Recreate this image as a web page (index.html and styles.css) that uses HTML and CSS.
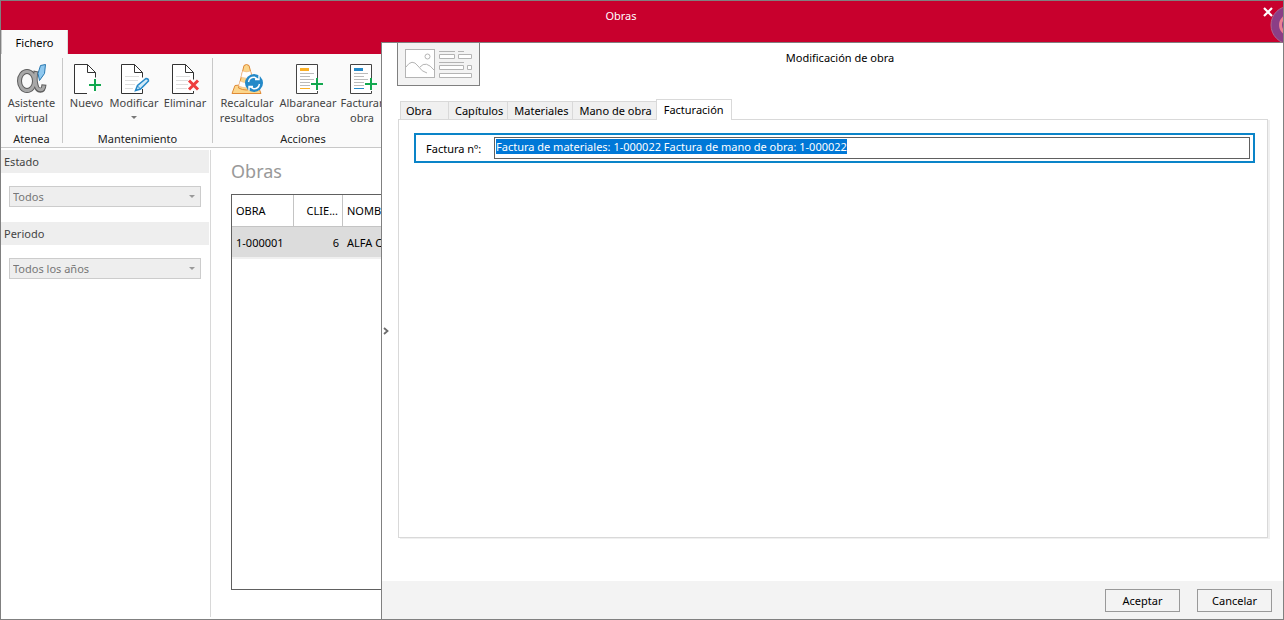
FILE: index.html
```html
<!DOCTYPE html>
<html lang="es">
<head>
<meta charset="utf-8">
<title>Obras</title>
<link rel="stylesheet" href="styles.css">
</head>
<body>
<div class="window">
  <header class="titlebar">
    <h1 class="window-title">Obras</h1>
    <button class="menu-tab" type="button">Fichero</button>
    <button class="close" type="button" aria-label="Cerrar">
      <svg width="10" height="10" viewBox="0 0 10 10"><path d="M1 1l8 8M9 1L1 9" stroke="#fff" stroke-width="2.2"/></svg>
    </button>
  </header>
  <svg class="badge" width="14" height="40" viewBox="0 0 14 40" aria-hidden="true">
    <circle cx="20" cy="20" r="19" fill="#8b3e86" stroke="#a9688f"/>
    <circle cx="20" cy="20" r="9.500" fill="none" stroke="#ea7f92" stroke-width="3"/>
    <path d="M13 3h1v11h-1zM13 27h1v11h-1z" fill="#5a62c0"/>
  </svg>

  <nav class="ribbon">
    <section class="group group-atenea">
      <div class="tools">
        <button class="tool" type="button">
          <svg width="32" height="32" viewBox="0 0 32 32">
            <g fill="none" stroke="#5c5c5c" stroke-width="5">
              <ellipse cx="11" cy="18" rx="7.500" ry="9.500"/>
              <path d="M20 8c-1 5-1.500 9 0 14 1.500 7 7.500 7 8-.5"/>
            </g>
            <g fill="none" stroke="#a8a8a8" stroke-width="3">
              <ellipse cx="11" cy="18" rx="7.500" ry="9.500"/>
              <path d="M20 9c-1 5-1.500 8 0 13 1.500 6 7 6.500 8 .5"/>
            </g>
            <path d="M24.500 2.500l5-1-1 9-5 7-1.500-7z" fill="#8fc8ef" stroke="#2878b0"/>
          </svg>
          <span>Asistente<br>virtual</span>
        </button>
      </div>
      <h2 class="group-name">Atenea</h2>
    </section>
    <section class="group group-edit">
      <div class="tools">
        <button class="tool" type="button">
          <svg width="32" height="32" viewBox="0 0 32 32">
            <path d="M3.500 1.500h13l8 8v21h-21z" fill="#fff"/><path d="M16 30.500H3.500v-29h13l8 8v5M16.500 1.500v8h8" fill="none" stroke="#333"/>
            <path d="M24 16v12M18 22h12" stroke="#12a84f" stroke-width="2"/>
          </svg>
          <span>Nuevo</span>
        </button>
        <button class="tool" type="button">
          <svg width="32" height="32" viewBox="0 0 32 32">
            <path d="M3.500 1.500h13l8 8v21h-21z" fill="#fff"/><path d="M24.500 26v4.500h-21v-29h13l8 8v5M16.500 1.500v8h8" fill="none" stroke="#333"/>
            <path d="M7 13.500h14M7 17.500h13M7 21.500h10M7 25.500h8" stroke="#ddd"/>
            <path d="M17.500 27.500l2-5L28 15.500q2.500 0 2.500 2.500L22.500 26z" fill="#d2eaf8" stroke="#2488c8" stroke-width="1.500"/><path d="M19.500 23l3 3" stroke="#2488c8"/>
          </svg>
          <span>Modificar</span>
          <i class="arrow"></i>
        </button>
        <button class="tool" type="button">
          <svg width="32" height="32" viewBox="0 0 32 32">
            <path d="M3.500 1.500h13l8 8v21h-21z" fill="#fff"/><path d="M24.500 28v2.500h-21v-29h13l8 8v7M16.500 1.500v8h8" fill="none" stroke="#333"/>
            <path d="M7 13.500h14M7 17.500h12M7 21.500h12M7 25.500h11" stroke="#ddd"/>
            <path d="M20 17.500l9 9M29 17.500l-9 9" stroke="#ee3e3e" stroke-width="3"/>
          </svg>
          <span>Eliminar</span>
        </button>
      </div>
      <h2 class="group-name">Mantenimiento</h2>
    </section>
    <section class="group group-actions">
      <div class="tools">
        <button class="tool" type="button">
          <svg width="32" height="32" viewBox="0 0 32 32">
            <path d="M1 30.500l3-8 22-2 4 10z" fill="#fbd68c" stroke="#e08a35"/>
            <path d="M7.500 25L13 2.500q2.500-2 5 0L24 25q-9 4-16.500 0z" fill="#fbd68c" stroke="#e08a35"/>
            <path d="M11.600 8q4 1.800 7.800 0l1.600 6q-5.500 2.500-11 0zM9 18q7 3.500 13.500 0l1.200 5q-8 3.500-16 0z" fill="#fff" stroke="#efb080" stroke-width=".5"/>
            <circle cx="23" cy="20" r="9" fill="#2489c8"/>
            <path d="M17.500 19q1-5 6-4.700l4 2.200M28.500 21q-1 5-6 4.700l-4-2.200M28 12.500v4h-4M18 27.500v-4h4" fill="none" stroke="#fff" stroke-width="1.400"/>
          </svg>
          <span>Recalcular<br>resultados</span>
        </button>
        <button class="tool" type="button">
          <svg width="32" height="32" viewBox="0 0 32 32">
            <path d="M4.500 1.500h21v29h-21z" fill="#fff"/><path d="M25.500 15V1.500h-21v29h21V28" fill="none" stroke="#444"/>
            <path d="M8 5h9v3H8zM8 25h10v1H8z" fill="#fbb026"/>
            <path d="M8 10.500h14M8 13.500h10M8 16.500h14M8 19.500h10M8 22.500h10" stroke="#bbb"/>
            <path d="M25 15v12M19 21h12" stroke="#12a84f" stroke-width="2"/>
          </svg>
          <span>Albaranear<br>obra</span>
        </button>
        <button class="tool" type="button">
          <svg width="32" height="32" viewBox="0 0 32 32">
            <path d="M4.500 1.500h21v29h-21z" fill="#fff"/><path d="M25.500 15V1.500h-21v29h21V28" fill="none" stroke="#444"/>
            <path d="M8 5h9v3H8zM8 25h10v1H8z" fill="#2489c8"/>
            <path d="M8 10.500h14M8 13.500h10M8 16.500h14M8 19.500h10M8 22.500h10" stroke="#bbb"/>
            <path d="M25 15v12M19 21h12" stroke="#12a84f" stroke-width="2"/>
          </svg>
          <span>Facturar<br>obra</span>
        </button>
      </div>
      <h2 class="group-name">Acciones</h2>
    </section>
  </nav>

  <div class="workspace">
    <aside class="filters">
      <label class="filter-name" for="estado">Estado</label>
      <div class="select-box"><select id="estado" disabled><option>Todos</option></select><i class="arrow"></i></div>
      <label class="filter-name" for="periodo">Periodo</label>
      <div class="select-box"><select id="periodo" disabled><option>Todos los años</option></select><i class="arrow"></i></div>
    </aside>
    <main class="content">
      <h2 class="content-title">Obras</h2>
      <div class="grid">
        <table>
          <thead><tr><th class="col-id">OBRA</th><th class="col-client">CLIE...</th><th>NOMBRE</th></tr></thead>
          <tbody><tr><td>1-000001</td><td class="number">6</td><td>ALFA C</td></tr></tbody>
        </table>
      </div>
    </main>
  </div>

  <section class="dialog" role="dialog" aria-labelledby="dialog-title">
    <div class="dialog-body">
      <button class="collapse" type="button" aria-label="Contraer">
        <svg width="7" height="8" viewBox="0 0 7 8"><path d="M1 1l3.500 3L1 7" fill="none" stroke="#6c6c6c" stroke-width="1.800"/></svg>
      </button>
      <div class="dialog-main">
        <div class="dialog-head">
          <div class="card-icon">
            <svg width="68" height="30" viewBox="0 0 68 30" fill="none" stroke="#b4b4b4">
              <rect x=".5" y=".5" width="29" height="28" fill="#fff"/>
              <circle cx="22.500" cy="7.500" r="2.500"/>
              <path d="M1 18q6-9 12-1 4 6 9 7M15 18q6-7 14 3M34 2.500h16M53 2.500h6M34 13.500h25"/>
              <path d="M34.500 5.500h15v4h-15zM53.500 5.500h13v4h-13zM34.500 16.500h24v4h-24zM62.500 16.500h4v4h-4zM34.500 24.500h32v4h-32z" fill="#fff"/>
            </svg>
          </div>
          <h2 class="dialog-title" id="dialog-title">Modificación de obra</h2>
        </div>
        <div class="tabs" role="tablist">
          <button class="tab tab-first" role="tab" type="button">Obra</button>
          <button class="tab" role="tab" type="button">Capítulos</button>
          <button class="tab" role="tab" type="button">Materiales</button>
          <button class="tab" role="tab" type="button">Mano de obra</button>
          <button class="tab active" role="tab" type="button" aria-selected="true">Facturación</button>
        </div>
        <div class="tab-panel" role="tabpanel">
          <div class="field">
            <label for="factura">Factura nº:</label>
            <input id="factura" type="text" value="Factura de materiales: 1-000022 Factura de mano de obra: 1-000022">
          </div>
        </div>
      </div>
    </div>
    <footer class="dialog-footer">
      <button class="action" type="button">Aceptar</button>
      <button class="action" type="button">Cancelar</button>
    </footer>
  </section>
</div>
<script src="script.js"></script>
</body>
</html>
```
FILE: script.js
```js
const invoice = document.getElementById("factura");
invoice.focus();
invoice.select();
```
FILE: styles.css
```css
* { box-sizing: border-box; }
body { margin: 0; font: 11px/15px "Noto Sans", "Open Sans", sans-serif; color: #000; }
button, input, select { font: inherit; color: inherit; margin: 0; padding: 0; border: 0; background: none; border-radius: 0; }
h1, h2 { margin: 0; font: inherit; }
svg { display: block; }

.window { position: relative; display: flex; flex-direction: column; height: 100vh; border: 1px solid #808080; background: #fff; overflow: hidden; }

.titlebar { display: grid; grid-template-columns: 1fr 42px; grid-template-rows: 29px 24px; background: #c8002d; color: #fff; flex: none; }
.window-title { grid-area: 1 / 1; text-align: center; line-height: 29px; }
.menu-tab { grid-area: 2 / 1; justify-self: start; width: 67px; border-left: 1px solid #c8c8c8; border-right: 1px solid #ddd; background: #fafafa; color: #000; }
.close { grid-area: 1 / 2; justify-self: end; align-self: start; margin: 6px 10px 0 0; }
.badge { position: absolute; top: 4px; right: -1px; z-index: 3; }

.ribbon { display: flex; flex: none; height: 94px; padding: 4px 0; background: #fafafa; border-bottom: 1px solid #c8c8c8; color: #444; }
.group { display: flex; flex-direction: column; flex: none; border-right: 1px solid #c8c8c8; }
.group-atenea { width: 62px; }
.group-edit { width: 150px; }
.group-actions { width: 180px; border-right: 0; }
.tools { display: flex; height: 73px; flex: none; justify-content: center; }
.tool { display: flex; flex-direction: column; align-items: center; justify-content: flex-start; flex: none; padding-top: 5px; line-height: 15px; }
.group-edit .tool { width: 47px; }
.group-edit .tool:nth-child(2) { width: 48px; }
.group-edit .tool:nth-child(3) { width: 54px; }
.group-actions .tools { justify-content: flex-start; }
.group-actions .tool { width: 54px; }
.group-actions .tool:first-child { width: 68px; }
.group-name { line-height: 15px; text-align: center; color: #222; }
.arrow { display: block; border: 3px solid transparent; border-top-color: #777; border-bottom: 0; margin-top: 6px; }

.workspace { display: flex; flex: 1; min-height: 0; padding: 2px 0; }
.filters { width: 210px; flex: none; border-right: 1px solid #d8d8d8; padding-right: 1px; }
.filter-name { display: block; height: 23px; padding-left: 3px; line-height: 23px; background: #eee; color: #444; }
.select-box { display: flex; position: relative; margin: 13px 8px 15px; height: 21px; }
.select-box select { appearance: none; flex: 1; padding-left: 3px; border: 1px solid #ccc; background: #eee; color: #777; opacity: 1; }
.select-box .arrow { position: absolute; top: 3px; right: 6px; border-top-color: #999; }
.content { display: flex; flex-direction: column; flex: 1; padding: 7px 20px 27px; }
.content-title { font-size: 18px; line-height: 28px; color: #999; margin-bottom: 9px; }
.grid { flex: 1; border: 1px solid #606060; }
table { width: 100%; border-collapse: separate; border-spacing: 0; table-layout: fixed; }
th, td { height: 32px; padding: 0 4px; text-align: left; font-weight: normal; white-space: nowrap; }
th { border-right: 1px solid #c4c4c4; border-bottom: 1px solid #c4c4c4; }
td { background: #dcdcdc; border-bottom: 2px solid #f0f0f0; }
.col-id { width: 62px; }
.col-client { width: 49px; }
.col-client, .number { text-align: right; }

.dialog { position: absolute; top: 41px; left: 380px; right: 0; bottom: 0; z-index: 2; display: flex; flex-direction: column; border: 1px solid #808080; border-width: 1px 0 0 1px; background: #fff; }
.dialog-body { display: flex; flex: 1; min-height: 0; }
.collapse { width: 15px; flex: none; padding: 38px 0 0 1px; }
.dialog-main { display: flex; flex-direction: column; flex: 1; padding-bottom: 43px; }
.dialog-head { display: grid; grid-template-columns: 83px 1fr 83px; height: 56px; flex: none; }
.card-icon { height: 43px; padding: 6px 7px; border: 1px solid #808080; border-top: 0; background: #f3f3f3; }
.dialog-title { text-align: center; line-height: 30px; }
.tabs { display: flex; align-items: flex-end; padding-left: 3px; height: 20px; flex: none; }
.tab { height: 18px; padding: 0 4px 0 6px; border: 1px solid #d9d9d9; border-width: 1px 0 0 1px; background: #f0f0f0; white-space: nowrap; }
.tab-first { width: 48px; padding-left: 5px; text-align: left; }
.tab.active { height: 21px; padding: 0 7px 2px; border-right-width: 1px; background: #fff; z-index: 1; margin-bottom: -1px; }
.tab-panel { flex: 1; margin: 0 15px 0 1px; padding: 13px 12px 13px 15px; border: 1px solid #d9d9d9; box-shadow: 2px 1px #f0f0f0; }
.field { display: flex; align-items: center; height: 30px; padding: 0 3px 0 10px; border: 2px solid #0a84c8; }
.field label { width: 68px; flex: none; }
.field input { flex: 1; height: 22px; padding: 0 1px 4px; border: 1px solid #606060; outline: 0; caret-color: transparent; }
.field input::selection { background: #0078d7; color: #fff; }
.dialog-footer { display: flex; justify-content: flex-end; gap: 17px; padding: 8px 11px 7px; background: #f3f3f3; flex: none; }
.action { width: 75px; height: 23px; border: 1px solid #999; }
```
